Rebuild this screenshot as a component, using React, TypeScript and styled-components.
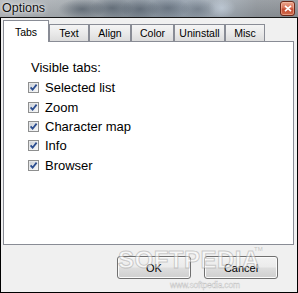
import React from 'react';
import styled, { createGlobalStyle } from 'styled-components';

const GlobalStyle = createGlobalStyle`
  html, body {
    margin: 0;
    padding: 0;
    background: #ffffff;
  }
  body {
    font-family: "Liberation Sans", Arial, sans-serif;
    color: #000;
  }
`;

const Window = styled.div`
  position: relative;
  width: 298px;
  height: 293px;
  display: flex;
  flex-direction: column;
  overflow: hidden;
`;

// aero glass with the blurred desktop behind it
const TitleBar = styled.div`
  flex: none;
  height: 17px;
  display: flex;
  align-items: center;
  justify-content: space-between;
  padding: 0 3px 0 2px;
  border-bottom: 1px solid #161616;
  background:
    radial-gradient(ellipse 24px 10px at 82px 9px, rgba(45, 58, 72, 0.5), transparent),
    radial-gradient(ellipse 22px 10px at 112px 8px, rgba(45, 58, 72, 0.45), transparent),
    radial-gradient(ellipse 20px 10px at 140px 9px, rgba(50, 62, 76, 0.45), transparent),
    radial-gradient(ellipse 22px 10px at 168px 8px, rgba(50, 62, 76, 0.4), transparent),
    radial-gradient(ellipse 18px 10px at 198px 9px, rgba(60, 72, 86, 0.35), transparent),
    radial-gradient(ellipse 14px 10px at 222px 8px, rgba(210, 222, 236, 0.5), transparent),
    linear-gradient(to bottom, rgba(255, 255, 255, 0.12), rgba(0, 0, 0, 0.05)),
    linear-gradient(to right, #b3b7bb 0%, #a3a9ae 22%, #86909a 42%, #8e9aa7 60%, #a2acb6 74%, #8e949a 86%, #8b9095 100%);
`;

const Title = styled.span`
  font-size: 12.5px;
  line-height: 17px;
  color: #111;
  text-shadow: 0 0 5px rgba(255, 255, 255, 0.9), 0 0 2px rgba(255, 255, 255, 0.7);
`;

const CloseButton = styled.div`
  width: 13px;
  height: 13px;
  border: 1px solid #6a2718;
  border-radius: 3px;
  display: flex;
  align-items: center;
  justify-content: center;
  background: linear-gradient(to bottom, #eaa48c 0%, #d8745a 45%, #c34a30 55%, #cf6a4c 100%);
  box-shadow: inset 0 0 0 1px rgba(255, 210, 190, 0.45);
`;

const Body = styled.div`
  flex: 1;
  display: flex;
  flex-direction: column;
  background: #f0f0f0;
  border: 1px solid #000;
  border-top: none;
  padding: 2px 3px 0 2px;
`;

const TabStrip = styled.div`
  display: flex;
  align-items: flex-end;
  height: 21px;
  flex: none;
`;

const Tab = styled.div<{ $active?: boolean; $w: number }>`
  position: relative;
  box-sizing: border-box;
  width: ${(p) => p.$w}px;
  height: ${(p) => (p.$active ? 22 : 17)}px;
  margin-bottom: ${(p) => (p.$active ? -1 : 0)}px;
  z-index: ${(p) => (p.$active ? 2 : 1)};
  border: 1px solid #898c95;
  border-bottom: none;
  background: ${(p) =>
    p.$active ? '#ffffff' : 'linear-gradient(to bottom, #f4f4f4 0%, #eaeaea 50%, #dcdcdc 100%)'};
  display: flex;
  justify-content: center;
  align-items: center;
  padding-top: ${(p) => (p.$active ? 1 : 0)}px;
  font-size: 10.5px;
  line-height: 12px;
  white-space: nowrap;
`;

const Panel = styled.div`
  box-sizing: border-box;
  height: 204px;
  background: #ffffff;
  border: 1px solid #898c95;
  padding: 18px 0 0 24px;
  display: flex;
  flex-direction: column;
`;

const Heading = styled.div`
  margin-left: 3px;
  margin-bottom: 3px;
  font-size: 13px;
  line-height: 15px;
`;

const Row = styled.label`
  display: flex;
  align-items: center;
  height: 19.4px;
  font-size: 13px;
  line-height: 15px;
`;

const Box = styled.span`
  flex: none;
  display: flex;
  width: 11px;
  height: 11px;
  margin-right: 6px;
`;

const ButtonRow = styled.div`
  display: flex;
  justify-content: flex-end;
  gap: 13px;
  margin-top: 11px;
  padding-right: 16px;
`;

const Button = styled.div`
  box-sizing: border-box;
  width: 74px;
  height: 23px;
  border: 1px solid #707070;
  border-radius: 3px;
  display: flex;
  align-items: center;
  justify-content: center;
  font-size: 11px;
  background: linear-gradient(to bottom, #f2f2f2 0%, #ebebeb 48%, #dddddd 52%, #cfcfcf 100%);
  box-shadow: inset 0 0 0 1px #fbfbfb;
`;

const Watermark = styled.div`
  position: absolute;
  left: 118px;
  top: 246px;
  font-size: 24px;
  font-weight: bold;
  letter-spacing: 0.5px;
  color: rgba(255, 255, 255, 0.5);
  -webkit-text-stroke: 1px rgba(140, 140, 140, 0.42);
  pointer-events: none;
`;

const WatermarkTm = styled.span`
  position: absolute;
  left: 254px;
  top: 246px;
  font-size: 6px;
  color: rgba(150, 150, 150, 0.5);
  pointer-events: none;
`;

const WatermarkUrl = styled.span`
  position: absolute;
  left: 170px;
  top: 280px;
  font-size: 8.5px;
  letter-spacing: -0.2px;
  color: rgba(255, 255, 255, 0.75);
  -webkit-text-stroke: 0.4px rgba(140, 140, 140, 0.5);
  pointer-events: none;
`;

const CheckIcon = () => (
  <svg width="11" height="11" viewBox="0 0 11 11">
    <defs>
      <linearGradient id="cbfill" x1="0" y1="0" x2="1" y2="1">
        <stop offset="0" stopColor="#cbd0d6" />
        <stop offset="1" stopColor="#f8f9fa" />
      </linearGradient>
    </defs>
    <rect x="0.5" y="0.5" width="10" height="10" fill="#f4f4f4" stroke="#8e8f8f" />
    <rect x="1.5" y="1.5" width="8" height="8" fill="url(#cbfill)" />
    <path d="M2.6 5.4 L4.6 7.7 L8.6 2.6" fill="none" stroke="#2b4d8f" strokeWidth="1.8" />
  </svg>
);

const CloseIcon = () => (
  <svg width="8" height="7" viewBox="0 0 8 7">
    <path d="M1 0.8 L7 6.2 M7 0.8 L1 6.2" stroke="#ffffff" strokeWidth="1.7" />
  </svg>
);

const tabs = [
  { label: 'Tabs', w: 46, active: true },
  { label: 'Text', w: 40 },
  { label: 'Align', w: 42 },
  { label: 'Color', w: 43 },
  { label: 'Uninstall', w: 51 },
  { label: 'Misc', w: 40 },
];

const options = ['Selected list', 'Zoom', 'Character map', 'Info', 'Browser'];

const App = () => (
  <>
    <GlobalStyle />
    <Window>
      <TitleBar>
        <Title>Options</Title>
        <CloseButton>
          <CloseIcon />
        </CloseButton>
      </TitleBar>
      <Body>
        <TabStrip>
          {tabs.map((t) => (
            <Tab key={t.label} $w={t.w} $active={t.active}>
              {t.label}
            </Tab>
          ))}
        </TabStrip>
        <Panel>
          <Heading>Visible tabs:</Heading>
          {options.map((o) => (
            <Row key={o}>
              <Box>
                <CheckIcon />
              </Box>
              {o}
            </Row>
          ))}
        </Panel>
        <ButtonRow>
          <Button>OK</Button>
          <Button>Cancel</Button>
        </ButtonRow>
      </Body>
      <Watermark>SOFTPEDIA</Watermark>
      <WatermarkTm>TM</WatermarkTm>
      <WatermarkUrl>www.softpedia.com</WatermarkUrl>
    </Window>
  </>
);

export default App;
